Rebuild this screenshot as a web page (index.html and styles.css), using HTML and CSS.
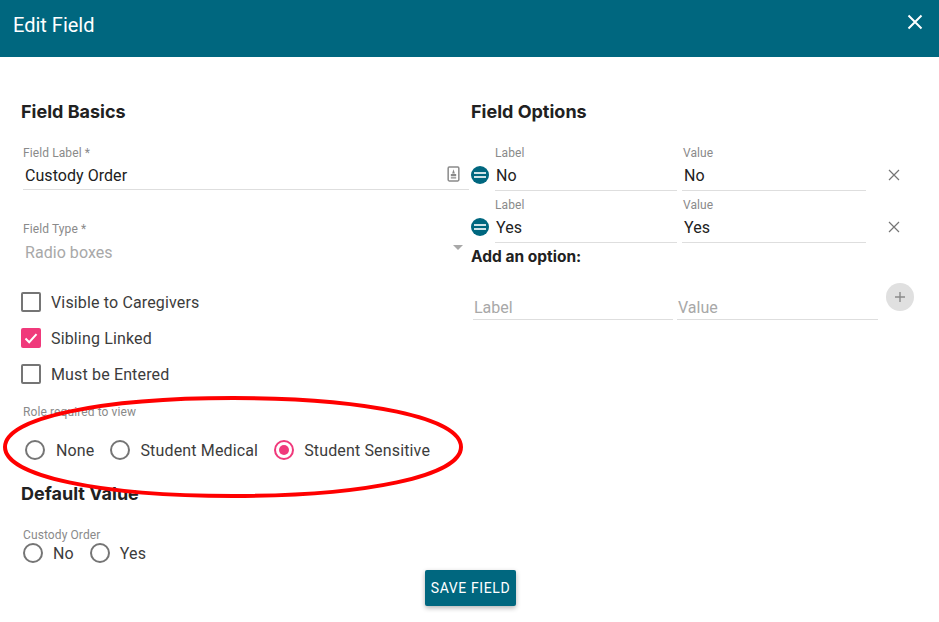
FILE: index.html
```html
<!DOCTYPE html>
<html lang="en">
<head>
    <meta charset="UTF-8">
    <title>Edit Field</title>
    <link rel="stylesheet" href="styles.css">
</head>
<body>
    <header class="topbar">
        <h1 class="topbar-title">Edit Field</h1>
        <svg class="topbar-close" viewBox="0 0 16 16"><path d="M1.5 1.5l13 13M14.5 1.5l-13 13"/></svg>
    </header>

    <main class="form">
        <section class="col-left">
            <h2 class="heading">Field Basics</h2>

            <div class="field field-label">
                <div class="caption">Field Label *</div>
                <div class="value">Custody Order
                    <svg class="contact-icon" viewBox="0 0 12 15"><rect x="1" y="1" width="10" height="13" rx="1"/><path class="fill" d="M6 3l1.3 4h-2.6zM3.5 7.5h5v2h-5zM3.5 10.5h5v1.2h-5z"/></svg>
                </div>
            </div>

            <div class="field field-type">
                <div class="caption">Field Type *</div>
                <div class="value disabled">Radio boxes<span class="arrow"></span></div>
            </div>

            <div class="checks">
                <div class="check"><span class="box"></span>Visible to Caregivers</div>
                <div class="check"><span class="box on"><svg viewBox="0 0 20 20"><path d="M4.5 10.5l3.7 3.7 7.3-8"/></svg></span>Sibling Linked</div>
                <div class="check"><span class="box"></span>Must be Entered</div>
            </div>

            <div class="caption role-caption">Role required to view</div>
            <div class="radios role-radios">
                <div class="radio radio-first"><span class="dot"></span>None</div>
                <div class="radio"><span class="dot"></span>Student Medical</div>
                <div class="radio"><span class="dot on"></span>Student Sensitive</div>
            </div>

            <h2 class="heading default-heading">Default Value</h2>
            <div class="caption default-caption">Custody Order</div>
            <div class="radios default-radios">
                <div class="radio"><span class="dot"></span>No</div>
                <div class="radio"><span class="dot"></span>Yes</div>
            </div>
        </section>

        <section class="col-right">
            <h2 class="heading">Field Options</h2>

            <div class="option option-first">
                <span class="handle"></span>
                <div class="opt-field opt-label"><div class="caption">Label</div><div class="value">No</div></div>
                <div class="opt-field opt-value"><div class="caption">Value</div><div class="value">No</div></div>
                <svg class="remove" viewBox="0 0 12 12"><path d="M1 1l10 10M11 1L1 11"/></svg>
            </div>
            <div class="option">
                <span class="handle"></span>
                <div class="opt-field opt-label"><div class="caption">Label</div><div class="value">Yes</div></div>
                <div class="opt-field opt-value"><div class="caption">Value</div><div class="value">Yes</div></div>
                <svg class="remove" viewBox="0 0 12 12"><path d="M1 1l10 10M11 1L1 11"/></svg>
            </div>

            <div class="add-title">Add an option:</div>
            <div class="add-row">
                <div class="add-input add-label">Label</div>
                <div class="add-input add-value">Value</div>
                <span class="add-btn"><svg viewBox="0 0 12 12"><path d="M6 1v10M1 6h10"/></svg></span>
            </div>
        </section>
    </main>

    <div class="actions"><button class="save-btn">SAVE FIELD</button></div>

    <!-- red marker drawn over the screenshot -->
    <svg class="marker" viewBox="0 0 939 622"><path d="M5 447C5 418 100 398 233 398C366 398 461 418 461 447C461 476 366 496 233 496C100 496 5 476 5 447Z"/></svg>
</body>
</html>
```

FILE: styles.css
```css
* {
    box-sizing: border-box;
}
html, body {
    margin: 0;
    height: 100%;
}
body {
    font-family: Roboto, "Liberation Sans", sans-serif;
    background-color: #fff;
    color: #212121;
    overflow: hidden;
    position: relative;
}
.topbar {
    height: 57px;
    background-color: #00677f;
    color: #fff;
    display: flex;
    align-items: center;
    justify-content: space-between;
    padding: 0 16px 8px 13px;
}
.topbar-title {
    margin: 0;
    font-size: 20px;
    font-weight: 400;
}
.topbar-close {
    width: 16px;
    height: 16px;
    margin-bottom: 5px;
    fill: none;
    stroke: #fff;
    stroke-width: 2;
}
.form {
    display: flex;
    padding: 44px 0 0 21px;
}
.col-left {
    width: 450px;
}
.heading {
    margin: 0;
    font-family: Inter, Roboto, sans-serif;
    font-size: 18px;
    line-height: 22px;
    font-weight: 700;
    color: #212121;
}
.caption {
    font-size: 12px;
    line-height: 14px;
    letter-spacing: 0.1px;
    color: #8a8a8a;
}
.value {
    font-size: 16px;
    line-height: 20px;
    letter-spacing: 0.05px;
    color: #212121;
}
.field {
    margin-left: 2px;
    width: 446px;
}
.field .value {
    position: relative;
    padding: 6px 2px 3px;
    height: 30px;
}
.field-label {
    margin-top: 23px;
}
.field-label .value {
    border-bottom: 1px solid #dedede;
}
.field-type {
    margin-top: 32px;
}
.field-type .value {
    padding-top: 7px;
}
.value.disabled {
    color: #a8a8a8;
}
.contact-icon {
    position: absolute;
    right: 9px;
    top: 6px;
    width: 13px;
    height: 16px;
    fill: none;
    stroke: #8a8a8a;
    stroke-width: 1.4;
}
.contact-icon .fill {
    fill: #8a8a8a;
    stroke: none;
}
.arrow {
    position: absolute;
    right: 6px;
    top: 9px;
    border-left: 5px solid transparent;
    border-right: 5px solid transparent;
    border-top: 5px solid #a8a8a8;
}
.checks {
    margin-top: 18px;
}
.check {
    display: flex;
    align-items: center;
    height: 36px;
    font-size: 16px;
    letter-spacing: 0.15px;
    color: #3c3c3c;
}
.box {
    width: 20px;
    height: 20px;
    margin-right: 10px;
    border: 2px solid #757575;
    border-radius: 2px;
}
.box.on {
    background-color: #f0397b;
    border: none;
}
.box svg {
    display: block;
    fill: none;
    stroke: #fff;
    stroke-width: 2;
}
.role-caption {
    margin: 13px 0 0 2px;
}
.radios {
    display: flex;
    font-size: 16px;
    letter-spacing: 0.15px;
    color: #3c3c3c;
}
.radio {
    display: flex;
    align-items: center;
}
.dot {
    width: 20px;
    height: 20px;
    margin-right: 10px;
    border: 2px solid #757575;
    border-radius: 50%;
    display: flex;
    align-items: center;
    justify-content: center;
}
.radio-first .dot {
    margin-right: 11px;
}
.dot.on {
    border-color: #f0397b;
}
.dot.on::after {
    content: "";
    width: 10px;
    height: 10px;
    border-radius: 50%;
    background-color: #f0397b;
}
.role-radios {
    margin: 21px 0 0 4px;
    gap: 16px;
}
.default-heading {
    margin-top: 23px;
}
.default-caption {
    margin: 23px 0 0 2px;
}
.default-radios {
    margin: 1px 0 0 2px;
    gap: 16px;
}
.col-right {
    flex: 1;
}
.option {
    display: flex;
    align-items: flex-end;
    margin-top: 7px;
}
.option-first {
    margin-top: 23px;
}
.handle {
    width: 18px;
    height: 18px;
    margin-bottom: 7px;
    border-radius: 50%;
    background-color: #00677f;
    background-image: linear-gradient(#cfe3e8, #cfe3e8), linear-gradient(#cfe3e8, #cfe3e8);
    background-size: 12px 2px;
    background-repeat: no-repeat;
    background-position: center 6px, center 10px;
}
.opt-field {
    border-bottom: 1px solid #dedede;
}
.opt-field .value {
    padding: 6px 2px 3px 1px;
    height: 30px;
    line-height: 20px;
}
.opt-label {
    width: 182px;
    margin-left: 6px;
}
.opt-value {
    width: 184px;
    margin-left: 5px;
}
.opt-value .caption {
    padding-left: 1px;
}
.opt-value .value {
    padding-left: 2px;
}
.remove {
    width: 12px;
    height: 12px;
    margin: 0 0 10px 22px;
    fill: none;
    stroke: #757575;
    stroke-width: 1.2;
}
.add-title {
    margin-top: 4px;
    font-family: Inter, Roboto, sans-serif;
    font-size: 15.5px;
    line-height: 20px;
    font-weight: 700;
}
.add-row {
    display: flex;
    align-items: flex-end;
    margin-top: 16px;
    position: relative;
}
.add-input {
    height: 33px;
    padding: 11px 1px 0;
    font-size: 16px;
    line-height: 20px;
    color: #a8a8a8;
    border-bottom: 1px solid #dedede;
}
.add-label {
    width: 200px;
    margin-left: 2px;
}
.add-value {
    width: 201px;
    margin-left: 4px;
}
.add-btn {
    width: 28px;
    height: 28px;
    margin: 0 0 9px 8px;
    border-radius: 50%;
    background-color: #e0e0e0;
    display: flex;
    align-items: center;
    justify-content: center;
}
.add-btn svg {
    width: 12px;
    height: 12px;
    fill: none;
    stroke: #8a8a8a;
    stroke-width: 1.4;
}
.actions {
    position: absolute;
    left: 0;
    right: 0;
    top: 570px;
    padding-left: 2px;
    display: flex;
    justify-content: center;
}
.save-btn {
    width: 91px;
    height: 36px;
    padding: 0;
    border: none;
    border-radius: 2px;
    background-color: #00677f;
    color: #fff;
    font-family: inherit;
    font-size: 14px;
    font-weight: 400;
    letter-spacing: 0.6px;
    box-shadow: 0 2px 5px rgba(0, 0, 0, 0.3);
}
.marker {
    position: absolute;
    left: 0;
    top: 0;
    width: 939px;
    height: 622px;
    fill: none;
    stroke: #f00;
    stroke-width: 4;
    pointer-events: none;
}
```
